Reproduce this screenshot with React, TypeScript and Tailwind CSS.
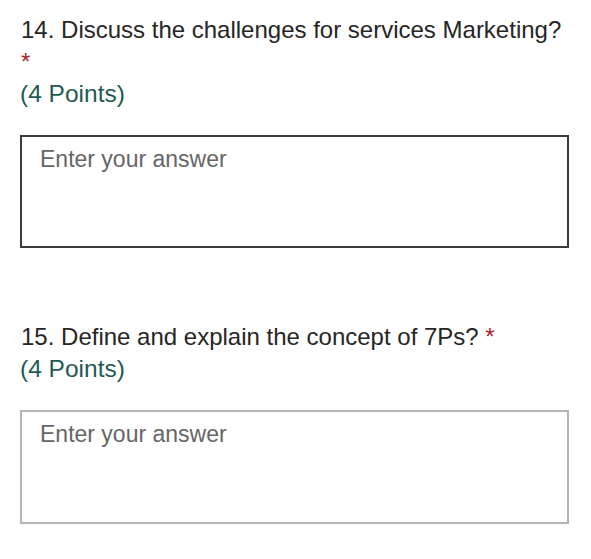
import React from "react";

const questions = [
    { id: 14, title: "Discuss the challenges for services Marketing?", points: 4, dark: true },
    { id: 15, title: "Define and explain the concept of 7Ps?", points: 4, dark: false },
];

export default function App() {
    return (
        <div className="min-h-[559px] w-[591px] bg-white px-[20px] pt-[14px] font-['Liberation_Sans',Arial,sans-serif]">
            {questions.map((q, i) => (
                <div key={q.id} className={i === 0 ? "" : "mt-[73px]"}>
                    <div className="pl-[1px] text-[24px] leading-[32px] text-[#262626]">
                        {q.id}. {q.title} <span className="text-[#a4262c]">*</span>
                    </div>
                    <div className="text-[24.5px] leading-[32px] text-[#1f5a55]">({q.points} Points)</div>
                    <div
                        className={`mt-[25px] w-[549px] bg-white px-[18px] pt-[10px] text-[23px] leading-[24px] text-[#666] ${
                            q.dark ? "h-[113px] border-2 border-[#3c3c3c]" : "h-[114px] border-2 border-[#b4b4b4]"
                        }`}
                    >
                        Enter your answer
                    </div>
                </div>
            ))}
        </div>
    );
}
